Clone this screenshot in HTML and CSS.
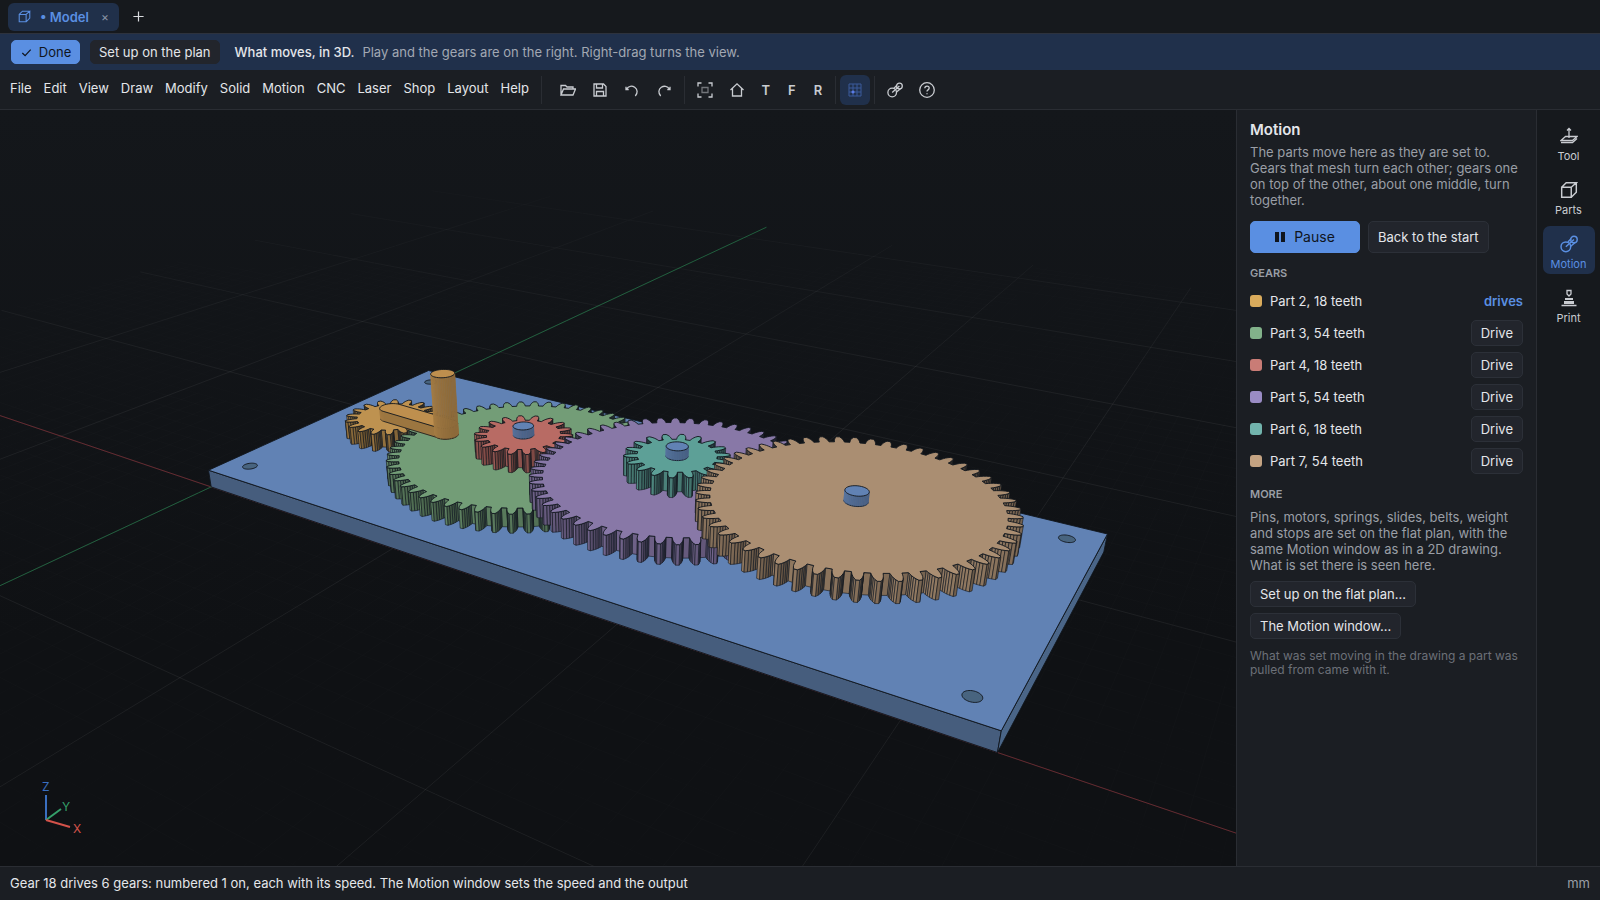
FILE: index.html
```html
<!DOCTYPE html>
<html lang="en">
<head>
<meta charset="utf-8">
<title>Model</title>
<link rel="stylesheet" href="styles.css">
</head>
<body>
<svg class="defs" aria-hidden="true">
  <symbol id="i-cube" viewBox="0 0 16 16"><path d="M1.500 5.500h8.500v9h-8.500zM1.500 5.500l4-4h9l-4.500 4M14.500 1.500v8.500l-4.500 4.500"/></symbol>
  <symbol id="i-link" viewBox="0 0 16 16"><circle cx="5.200" cy="10.500" r="4.300"/><circle cx="12.400" cy="4" r="2.900"/><path d="M5.200 10.500L12.400 4M7 6.300l3-3.200M9.500 10l4-3.300"/></symbol>
</svg>
<div class="app">
  <div class="tabs">
    <div class="tab">
      <svg class="ic ic-s" viewBox="0 0 16 16"><use href="#i-cube"/></svg>
      <span class="tab-name">• Model</span>
      <button class="tab-x" aria-label="Close tab">×</button>
    </div>
    <button class="tab-add" aria-label="New tab"><svg class="ic ic-s" viewBox="0 0 14 14"><path d="M7 1.500v11M1.500 7h11"/></svg></button>
  </div>
  <div class="banner">
    <button class="btn primary done"><svg class="ic ic-s" viewBox="0 0 14 14"><path d="M2.500 7.500l3 3L11.500 4"/></svg>Done</button>
    <button class="btn flat">Set up on the plan</button>
    <span class="lead">What moves, in 3D.</span>
    <span class="hint">Play and the gears are on the right. Right-drag turns the view.</span>
  </div>
  <div class="bar">
    <nav class="menu">
      <button>File</button><button>Edit</button><button>View</button><button>Draw</button><button>Modify</button><button>Solid</button><button>Motion</button><button>CNC</button><button>Laser</button><button>Shop</button><button>Layout</button><button>Help</button>
    </nav>
    <div class="tools first">
      <button aria-label="Open"><svg class="ic" viewBox="0 0 16 16"><path d="M1 13V3.500h4.500l1.500 1.500h6v2M1 13l2.500-6H15.500L13 13z"/></svg></button>
      <button aria-label="Save"><svg class="ic" viewBox="0 0 16 16"><path d="M2 2h9.500L14 4.500V14H2zM4.500 2v4h6V2M4.500 14V9.500h7V14"/></svg></button>
      <button aria-label="Undo"><svg class="ic" viewBox="0 0 16 16"><path d="M2.500 7C4.500 4 8 3.500 10.700 5.300c2.900 2 3.300 5.700.600 8.700M2 4.800v2.700h2.700"/></svg></button>
      <button aria-label="Redo"><svg class="ic" viewBox="0 0 16 16"><path d="M13.500 7C11.500 4 8 3.500 5.300 5.300c-2.900 2-3.300 5.700-.600 8.700M14 4.800v2.700h-2.700"/></svg></button>
    </div>
    <div class="tools letters">
      <button aria-label="Fit"><svg class="ic" viewBox="0 0 16 16"><path d="M1 4.500V1h3.500M11.500 1H15v3.500M15 11.500V15h-3.500M4.500 15H1v-3.500"/><path class="dim" d="M5 5.500h6v5H5z"/></svg></button>
      <button aria-label="Home"><svg class="ic" viewBox="0 0 16 16"><path d="M1.500 8L8 1.800 14.500 8M3.500 6.500V14h9V6.500"/></svg></button>
      <button>T</button><button>F</button><button>R</button>
    </div>
    <div class="tools grid">
      <button class="on" aria-label="Grid"><svg class="ic" viewBox="0 0 16 16"><path class="lattice" d="M2 2h12v12H2zM6 2v12M10 2v12M2 6h12M2 10h12"/><path d="M6 8.500v3M4.500 10h3"/></svg></button>
    </div>
    <div class="tools">
      <button aria-label="Motion"><svg class="ic" viewBox="0 0 16 16"><use href="#i-link"/></svg></button>
      <button aria-label="Help"><svg class="ic" viewBox="0 0 16 16"><circle cx="8" cy="8" r="7.300"/><path d="M5.800 6.300c0-3 4.400-2.900 4.400-.2 0 1.800-2.200 1.700-2.200 3.400M8 11.300v1"/></svg></button>
    </div>
  </div>
  <main class="work">
    <div class="view">
      <svg id="scene" class="scene" viewBox="0 110 1236 757" preserveAspectRatio="xMidYMid slice" role="img" aria-label="Gear train on a plate"></svg>
      <svg class="gizmo" viewBox="0 0 60 60" aria-hidden="true">
        <path class="gz" d="M10 40V15"/><path class="gy" d="M10 40l15-11"/><path class="gx" d="M10 40l24 7"/>
        <text class="tz" x="6" y="11">Z</text><text class="ty" x="26" y="31">Y</text><text class="tx" x="37" y="53">X</text>
      </svg>
    </div>
    <aside class="panel">
      <h2>Motion</h2>
      <p>The parts move here as they are set to. Gears that mesh turn each other; gears one on top of the other, about one middle, turn together.</p>
      <div class="play">
        <button class="btn primary pause"><svg class="pi" viewBox="0 0 10 10"><path d="M0 0h4v10H0zM6 0h4v10H6z"/></svg>Pause</button>
        <button class="btn back">Back to the start</button>
      </div>
      <h3>GEARS</h3>
      <ul class="gears">
        <li><i class="sw c2"></i><span>Part 2, 18 teeth</span><b>drives</b></li>
        <li><i class="sw c3"></i><span>Part 3, 54 teeth</span><button class="btn">Drive</button></li>
        <li><i class="sw c4"></i><span>Part 4, 18 teeth</span><button class="btn">Drive</button></li>
        <li><i class="sw c5"></i><span>Part 5, 54 teeth</span><button class="btn">Drive</button></li>
        <li><i class="sw c6"></i><span>Part 6, 18 teeth</span><button class="btn">Drive</button></li>
        <li><i class="sw c7"></i><span>Part 7, 54 teeth</span><button class="btn">Drive</button></li>
      </ul>
      <h3>MORE</h3>
      <p class="more">Pins, motors, springs, slides, belts, weight and stops are set on the flat plan, with the same Motion window as in a 2D drawing. What is set there is seen here.</p>
      <div class="links">
        <button class="btn">Set up on the flat plan…</button>
        <button class="btn">The Motion window…</button>
      </div>
      <p class="note">What was set moving in the drawing a part was pulled from came with it.</p>
    </aside>
    <nav class="rail">
      <button><svg class="ic ic-l" viewBox="0 0 18 18"><path d="M9 11V1.500M7 3.500l2-2 2 2M5.500 9.500h11.500l-4.500 4H1z"/><path d="M1 15.500h11.500l4.500-4"/></svg>Tool</button>
      <button><svg class="ic ic-l" viewBox="0 0 16 16"><use href="#i-cube"/></svg>Parts</button>
      <button class="on"><svg class="ic ic-l" viewBox="0 0 16 16"><use href="#i-link"/></svg>Motion</button>
      <button><svg class="ic ic-l" viewBox="0 0 18 18"><path d="M7 1.500h4v3.500l-2 2-2-2zM1.500 16.500h15"/><path class="solid" d="M5 9h8v2H5zM4 12h10v3H4z"/></svg>Print</button>
    </nav>
  </main>
  <footer class="status"><span>Gear 18 drives 6 gears: numbered 1 on, each with its speed. The Motion window sets the speed and the output</span><span class="unit">mm</span></footer>
</div>
<script src="scene.js"></script>
</body>
</html>
```
FILE: styles.css
```css
* { box-sizing: border-box; }
body { margin: 0; background: #101215; color: #e4e6ea; font: 13px/16px Inter, "Noto Sans", sans-serif; }
button { font: inherit; color: inherit; background: none; border: 0; padding: 0; margin: 0; }
h2, h3, p, ul { margin: 0; padding: 0; }
.defs { position: absolute; width: 0; height: 0; }
.app { height: 100vh; display: flex; flex-direction: column; overflow: hidden; }
.ic { width: 16px; height: 16px; fill: none; stroke: currentColor; stroke-width: 1.3; display: block; }
.ic-s { width: 13px; height: 13px; }
.ic-l { width: 18px; height: 18px; }
.dim { opacity: .5; }
.lattice { stroke: #3a5a9c; stroke-width: 1; }
.solid { fill: currentColor; stroke: none; }

.tabs { height: 33px; flex: none; background: #16191d; display: flex; align-items: center; padding: 0 8px; gap: 13px; }
.tab { height: 28px; padding: 0 10px; display: flex; align-items: center; background: #20304a; color: #5a8fe2; border-radius: 6px; }
.tab-name { font-weight: 600; margin: 0 12px 0 9px; }
.tab-x { color: #8893a5; font-size: 12px; }
.tab-add { color: #d8dade; }

.banner { height: 37px; flex: none; background: #20304b; border-top: 1px solid #2d323d; display: flex; align-items: center; padding: 0 11px; }
.btn { border: 1px solid #2c3038; background: #22252c; border-radius: 5px; padding: 0 9px; height: 26px; white-space: nowrap; display: inline-flex; align-items: center; justify-content: center; }
.primary { background: #5a8fe2; border-color: #5a8fe2; color: #10151d; }
.done { width: 69px; height: 24px; gap: 6px; padding: 0; }
.flat { border-color: #22252c; height: 24px; margin-left: 10px; padding: 0 8px; }
.lead { margin-left: 15px; font-weight: 500; }
.hint { margin-left: 8px; color: #a2a8b3; }

.bar { height: 40px; flex: none; background: #1b1e23; border-bottom: 1px solid #2a2d33; display: flex; align-items: center; padding-left: 10px; }
.menu { display: flex; gap: 12px; margin-bottom: 4px; }
.tools { display: flex; align-items: center; color: #c9ccd1; padding: 0 4px; border-left: 1px solid #2a2d33; height: 28px; }
.tools button { width: 32px; height: 30px; display: flex; align-items: center; justify-content: center; font-weight: 600; }
.tools.first { margin-left: 12px; padding: 0 4px 0 10px; }
.tools.letters button:nth-child(n+3) { width: 26px; }
.tools .on { background: #20304b; color: #5f7ff0; border-radius: 6px; width: 30px; }

.work { flex: 1; min-height: 0; display: flex; }
.view { flex: 1; min-width: 0; position: relative; background: linear-gradient(#14171b, #0f1114 70%); }
.scene { width: 100%; height: 100%; display: block; }
.gizmo { position: absolute; left: 36px; bottom: 17px; width: 60px; height: 78px; fill: none; stroke-width: 2; font: 12px Inter, sans-serif; }
.gz { stroke: #3a6fc0; } .gy { stroke: #35a06a; } .gx { stroke: #d4524a; }
.tz { fill: #3a6fc0; } .ty { fill: #35a06a; } .tx { fill: #d4524a; }

.panel { width: 300px; flex: none; background: #1b1e23; border-left: 1px solid #2a2d33; padding: 10px 13px; color: #e4e6ea; }
.panel h2 { font-size: 15px; line-height: 20px; font-weight: 600; }
.panel p { color: #9a9ea6; margin-top: 4px; }
.play { display: flex; gap: 8px; margin-top: 13px; }
.play .btn { height: 32px; }
.play .pause { width: 110px; font-size: 14px; gap: 9px; }
.play .back { padding: 0 9px; }
.pi { width: 10px; height: 10px; fill: currentColor; }
.panel h3 { font-size: 11px; line-height: 14px; font-weight: 600; color: #9a9ea6; margin-top: 13px; }
.gears { list-style: none; display: flex; flex-direction: column; gap: 6px; margin-top: 8px; }
.gears li { height: 26px; display: flex; align-items: center; gap: 8px; }
.gears b { margin-left: auto; color: #5a8fe2; font-weight: 600; }
.gears .btn { margin-left: auto; }
.sw { width: 12px; height: 12px; border-radius: 3px; }
.c2 { background: #d9ab5c; } .c3 { background: #82b28a; } .c4 { background: #c97c76; }
.c5 { background: #9a8cc4; } .c6 { background: #72b4ad; } .c7 { background: #c4a382; }
.panel .more { margin-top: 8px; }
.links { display: flex; flex-direction: column; align-items: flex-start; gap: 6px; margin-top: 8px; }
.panel .note { font-size: 12px; line-height: 14px; color: #6c7078; margin-top: 10px; }

.rail { width: 64px; flex: none; background: #16191d; border-left: 1px solid #2a2d33; padding: 8px 5px; display: flex; flex-direction: column; gap: 6px; align-items: center; }
.rail button { width: 52px; height: 48px; padding-top: 6px; border-radius: 7px; display: flex; flex-direction: column; align-items: center; justify-content: center; gap: 4px; font-size: 11px; line-height: 14px; color: #c9ccd1; }
.rail .on { background: #20304b; color: #5a8fe2; }

.status { height: 34px; flex: none; background: #1b1e23; border-top: 1px solid #2a2d33; display: flex; align-items: center; justify-content: space-between; padding: 0 10px 2px; }
.unit { color: #9a9ea6; }
```
FILE: scene.js
```js
// Perspective drawing of the gear train; z = 0 is the top of the plate.
const L = 329, W = 141, T = 7.7, MID = 70.5;
const scene = document.getElementById('scene');
const depth = (x, y, z) => 1 - 0.00095267 * x + 0.0015363 * y - 0.00087429 * z;
function project([x, y, z]) {
  const w = depth(x, y, z);
  return [(1.4558 * x + 2.2186 * y - 0.5324 * z + 208.5) / w,
          (0.09541 * x - 0.13709 * y - 2.5957 * z + 470.7) / w];
}
function path(d, attrs) {
  const el = document.createElementNS('http://www.w3.org/2000/svg', 'path');
  el.setAttribute('d', d);
  for (const k in attrs) el.setAttribute(k, attrs[k]);
  scene.appendChild(el);
}
const outline = pts => 'M' + pts.map(p => p[0].toFixed(2) + ' ' + p[1].toFixed(2)).join('L');
const EDGE = '#11161d';
function poly(points, fill, stroke = EDGE, width = 0.9) {
  path(outline(points.map(project)) + 'Z', { fill, stroke, 'stroke-width': width, 'stroke-linejoin': 'round' });
}
function area(q) {
  let s = 0;
  q.forEach((p, i) => { const n = q[(i + 1) % q.length]; s += p[0] * n[1] - n[0] * p[1]; });
  return s;
}
function shade(rgb, k) { return 'rgb(' + rgb.map(c => Math.round(c * k)).join(',') + ')'; }

// Grid on the underside plane, clipped in front of the eye.
function line(x0, y0, x1, y1, stroke, near, fade) {
  const n = 24;
  for (let i = 0; i < n; i++) {
    const p = [x0 + (x1 - x0) * i / n, y0 + (y1 - y0) * i / n, -T];
    const q = [x0 + (x1 - x0) * (i + 1) / n, y0 + (y1 - y0) * (i + 1) / n, -T];
    const w = Math.max(depth(...p), depth(...q));
    if (Math.min(depth(...p), depth(...q)) < 0.12) continue;
    const o = fade ? near * Math.max(0, Math.min(1, (2.25 - w) / 1.1)) : near;
    if (o > 0.002) path(outline([project(p), project(q)]), { stroke, 'stroke-opacity': o.toFixed(3), 'stroke-width': 1 });
  }
}
for (let k = -290; k <= 620; k += 10) line(k, -395, k, 537, '#fff', k % 100 ? 0.01 : 0.06, true);
for (let k = -390; k <= 530; k += 10) line(-297, k, 627, k, '#fff', k % 100 ? 0.01 : 0.06, true);
line(-297, 0, 720, 0, '#8a3038', 0.65, false);
line(0, -395, 0, 537, '#237a4a', 0.7, false);

// Prism: walls far to near, then the cap.
function prism(pts, z0, z1, rgb, edges) {
  const walls = [];
  for (let i = 0; i < pts.length; i++) {
    const a = pts[i], b = pts[(i + 1) % pts.length];
    const quad = [[a[0], a[1], z0], [b[0], b[1], z0], [b[0], b[1], z1], [a[0], a[1], z1]];
    if (area(quad.map(project)) >= 0) continue;
    const len = Math.hypot(b[0] - a[0], b[1] - a[1]) || 1;
    const nx = (b[1] - a[1]) / len, ny = -(b[0] - a[0]) / len;
    const k = edges ? 0.6 + 0.25 * Math.max(0, -0.35 * nx - 0.94 * ny) : 0.82 - 0.08 * nx;
    walls.push({ quad, k, w: depth((a[0] + b[0]) / 2, (a[1] + b[1]) / 2, z0) });
  }
  walls.sort((p, q) => q.w - p.w);
  for (const f of walls) {
    const c = shade(rgb, f.k);
    poly(f.quad, c, edges ? EDGE : c, 0.6);
    if (!edges) path(outline([project(f.quad[0]), project(f.quad[1])]), { stroke: EDGE, 'stroke-width': 0.8 });
  }
  poly(pts.map(p => [p[0], p[1], z1]), shade(rgb, 1));
}
function circle(cx, cy, r, n = 40) {
  return Array.from({ length: n }, (_, i) => [cx + r * Math.cos(i / n * 2 * Math.PI), cy + r * Math.sin(i / n * 2 * Math.PI)]);
}
function gear(cx, teeth, phase, z0, rgb) {
  const m = 2, rp = m * teeth / 2, pitch = 2 * Math.PI / teeth;
  const prof = [[-2.8, 0.32], [-1.7, 0.3], [-0.8, 0.275], [0.2, 0.235], [1.2, 0.175], [2.2, 0.09]];
  const pts = [];
  for (let i = 0; i < teeth; i++) {
    const c = (i + phase) * pitch;
    for (const [dr, h] of prof) pts.push([cx + (rp + dr) * Math.cos(c - h * pitch), MID + (rp + dr) * Math.sin(c - h * pitch)]);
    for (const [dr, h] of prof.slice().reverse()) pts.push([cx + (rp + dr) * Math.cos(c + h * pitch), MID + (rp + dr) * Math.sin(c + h * pitch)]);
  }
  prism(pts, z0, z0 + 8, rgb, true);
}

const BLUE = [97, 130, 180];
poly([[0, 0, -T], [L, 0, -T], [L, 0, 0], [0, 0, 0]], '#465d7d');
poly([[L, 0, -T], [L, W, -T], [L, W, 0], [L, 0, 0]], '#4a6587');
poly([[0, 0, 0], [L, 0, 0], [L, W, 0], [0, W, 0]], '#6182b4');
for (const [x, y] of [[11.5, 12], [L - 12, 12], [11.5, W - 12], [L - 12, W - 12]])
  poly(circle(x, y, 3).map(p => [...p, 0]), '#48647f');

gear(38.8, 18, 0.38, 0, [190, 146, 80]);
gear(110.8, 54, 0.12, 0, [115, 157, 119]);

// Crank arm and handle, turned with the first gear.
const ORANGE = [190, 143, 78], TURN = -0.042, REACH = 32, arm = [];
const hx = 38.8 + REACH * Math.cos(TURN), hy = MID + REACH * Math.sin(TURN);
for (let i = 0; i <= 16; i++) {
  const a = TURN + Math.PI / 2 + i / 16 * Math.PI;
  arm.push([38.8 + 5 * Math.cos(a), MID + 5 * Math.sin(a)]);
}
for (let i = 0; i <= 16; i++) {
  const a = TURN - Math.PI / 2 + i / 16 * Math.PI;
  arm.push([hx + 5 * Math.cos(a), hy + 5 * Math.sin(a)]);
}
prism(arm, 7.4, 12.2, ORANGE, false);
prism(circle(hx, hy, 5), 7.2, 35, ORANGE, false);

gear(110.8, 18, 0.5, 8, [184, 107, 100]);
prism(circle(110.8, MID, 4.2), 15.8, 19.8, BLUE, false);
gear(182.8, 54, 0.97, 8, [136, 120, 167]);
gear(182.8, 18, 0.67, 16, [93, 160, 151]);
prism(circle(182.8, MID, 4.2), 23.7, 27.7, BLUE, false);
gear(254.8, 54, 0.83, 16, [170, 142, 114]);
prism(circle(254.8, MID, 4.2), 23.7, 27.7, BLUE, false);
```
